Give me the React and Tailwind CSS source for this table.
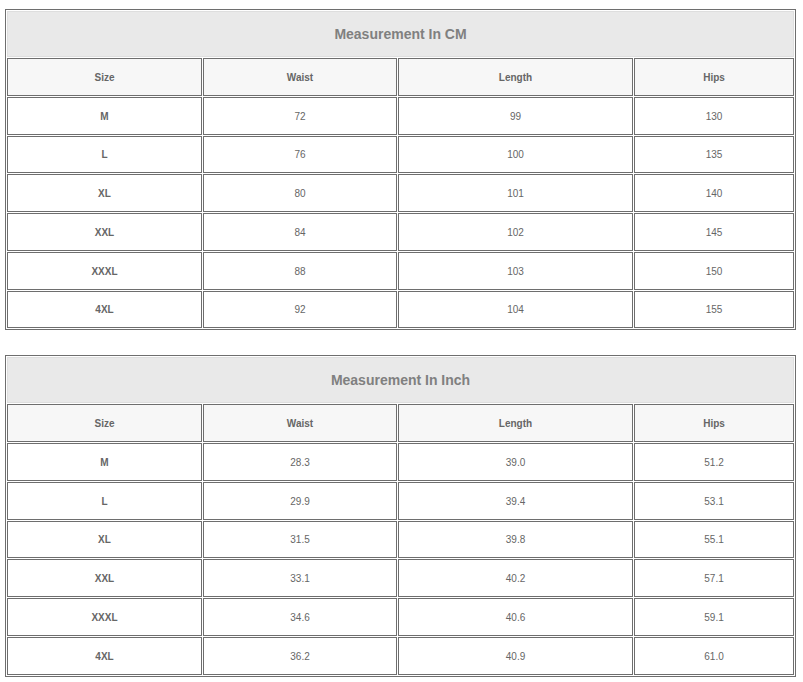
import React from 'react'

const sizes = ['M', 'L', 'XL', 'XXL', 'XXXL', '4XL']

const tables = [
  {
    title: 'Measurement In CM',
    rows: [
      ['72', '99', '130'],
      ['76', '100', '135'],
      ['80', '101', '140'],
      ['84', '102', '145'],
      ['88', '103', '150'],
      ['92', '104', '155'],
    ],
  },
  {
    title: 'Measurement In Inch',
    rows: [
      ['28.3', '39.0', '51.2'],
      ['29.9', '39.4', '53.1'],
      ['31.5', '39.8', '55.1'],
      ['33.1', '40.2', '57.1'],
      ['34.6', '40.6', '59.1'],
      ['36.2', '40.9', '61.0'],
    ],
  },
]

function SizeTable({ title, rows, className }) {
  const cell = 'h-[37.75px] pt-px border border-[#6e6e6e] text-center align-middle text-[10px] text-[#666]'
  return (
    <table className={`w-[791px] table-fixed border-separate border-spacing-[1px] border border-[#6e6e6e] ml-[5px] ${className}`}>
      <colgroup>
        <col className="w-[195px]" />
        <col className="w-[194px]" />
        <col className="w-[235px]" />
        <col className="w-[160px]" />
      </colgroup>
      <tbody>
        <tr>
          <td colSpan={4} className="h-[46px] border border-[#dedede] bg-[#e9e9e9] text-center text-[14px] font-bold text-[#808080]">
            {title}
          </td>
        </tr>
        <tr className="bg-[#f7f7f7]">
          {['Size', 'Waist', 'Length', 'Hips'].map((h) => (
            <td key={h} className={`${cell} font-bold`}>{h}</td>
          ))}
        </tr>
        {rows.map((r, i) => (
          <tr key={sizes[i]}>
            <td className={`${cell} font-bold`}>{sizes[i]}</td>
            {r.map((v, j) => (
              <td key={j} className={cell}>{v}</td>
            ))}
          </tr>
        ))}
      </tbody>
    </table>
  )
}

export default function App() {
  return (
    <div className="w-[803px] h-[682px] bg-white pt-[9px] font-['Liberation_Sans',Arial,sans-serif]">
      <SizeTable {...tables[0]} className="" />
      <SizeTable {...tables[1]} className="mt-[25px]" />
    </div>
  )
}
